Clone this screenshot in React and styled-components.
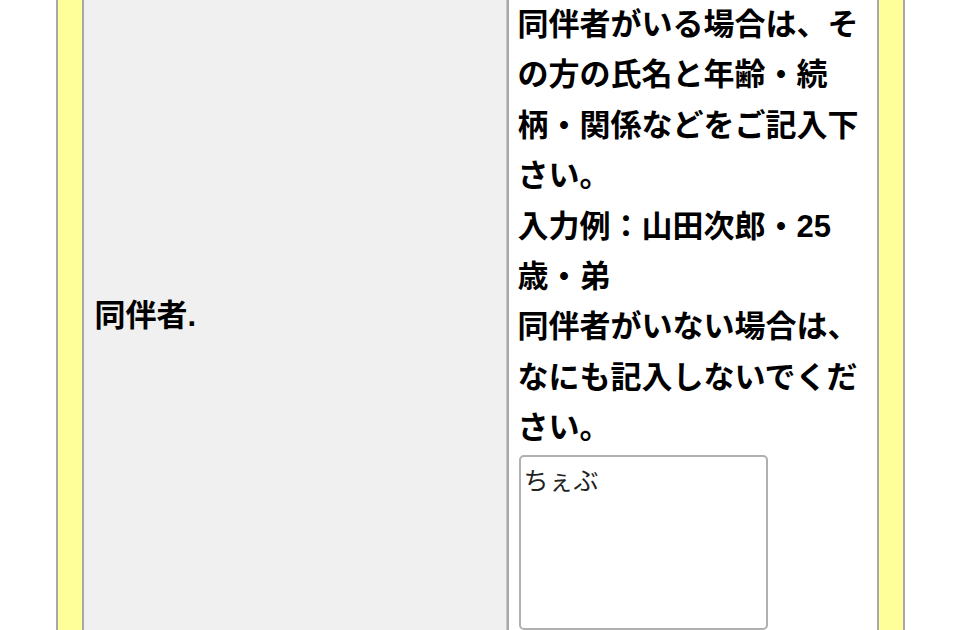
import React from "react";
import styled, { createGlobalStyle } from "styled-components";

const GlobalStyle = createGlobalStyle`
  html, body {
    margin: 0;
    padding: 0;
    background: #ffffff;
  }
  body {
    font-family: "Liberation Sans", "Noto Sans CJK JP", sans-serif;
    color: #000;
    overflow: hidden;
  }
`;

const Viewport = styled.div`
  width: 960px;
  height: 630px;
  overflow: hidden;
`;

const Panel = styled.div`
  box-sizing: border-box;
  width: 849px;
  margin: -36px auto 0;
  padding: 24px;
  background: #ffff99;
  border: 2px solid #a8a8a8;
`;

const FormTable = styled.table`
  width: 100%;
  border-collapse: separate;
  border-spacing: 0;
`;

const LabelCell = styled.th`
  box-sizing: border-box;
  width: 425px;
  background: #f0f0f0;
  border-left: 2px solid #a8a8a8;
  border-right: 1px solid #c8c8c8;
  padding: 10px 11px;
  text-align: left;
  vertical-align: middle;
  font-size: 31px;
  line-height: 50.4px;
  font-weight: bold;
`;

const FieldCell = styled.td`
  box-sizing: border-box;
  background: #ffffff;
  border-left: 2px solid #a8a8a8;
  border-right: 2px solid #a8a8a8;
  padding: 10px 14px 10px 9px;
  vertical-align: top;
`;

const Note = styled.p`
  margin: 0;
  font-size: 31px;
  line-height: 50.4px;
  font-weight: bold;
`;

const TextBox = styled.textarea`
  display: block;
  box-sizing: border-box;
  width: 249px;
  height: 175px;
  margin: 1px 0 3px 1px;
  padding: 4px 3px;
  border: 2px solid #b0b0b0;
  border-radius: 5px;
  background: #fff;
  font-family: "Noto Sans CJK JP", sans-serif;
  font-size: 25px;
  color: #222;
  resize: none;
  outline: none;
`;

export default function App() {
  return (
    <>
      <GlobalStyle />
      <Viewport>
        <Panel>
          <FormTable>
            <tbody>
              <tr>
                <LabelCell>同伴者.</LabelCell>
                <FieldCell>
                  <Note>
                    同伴者がいる場合は、その方の氏名と年齢・続柄・関係などをご記入下さい。
                  </Note>
                  <Note>入力例：山田次郎・25歳・弟</Note>
                  <Note>
                    同伴者がいない場合は、なにも記入しないでください。
                  </Note>
                  <TextBox defaultValue="ちぇぶ" />
                </FieldCell>
              </tr>
            </tbody>
          </FormTable>
        </Panel>
      </Viewport>
    </>
  );
}
